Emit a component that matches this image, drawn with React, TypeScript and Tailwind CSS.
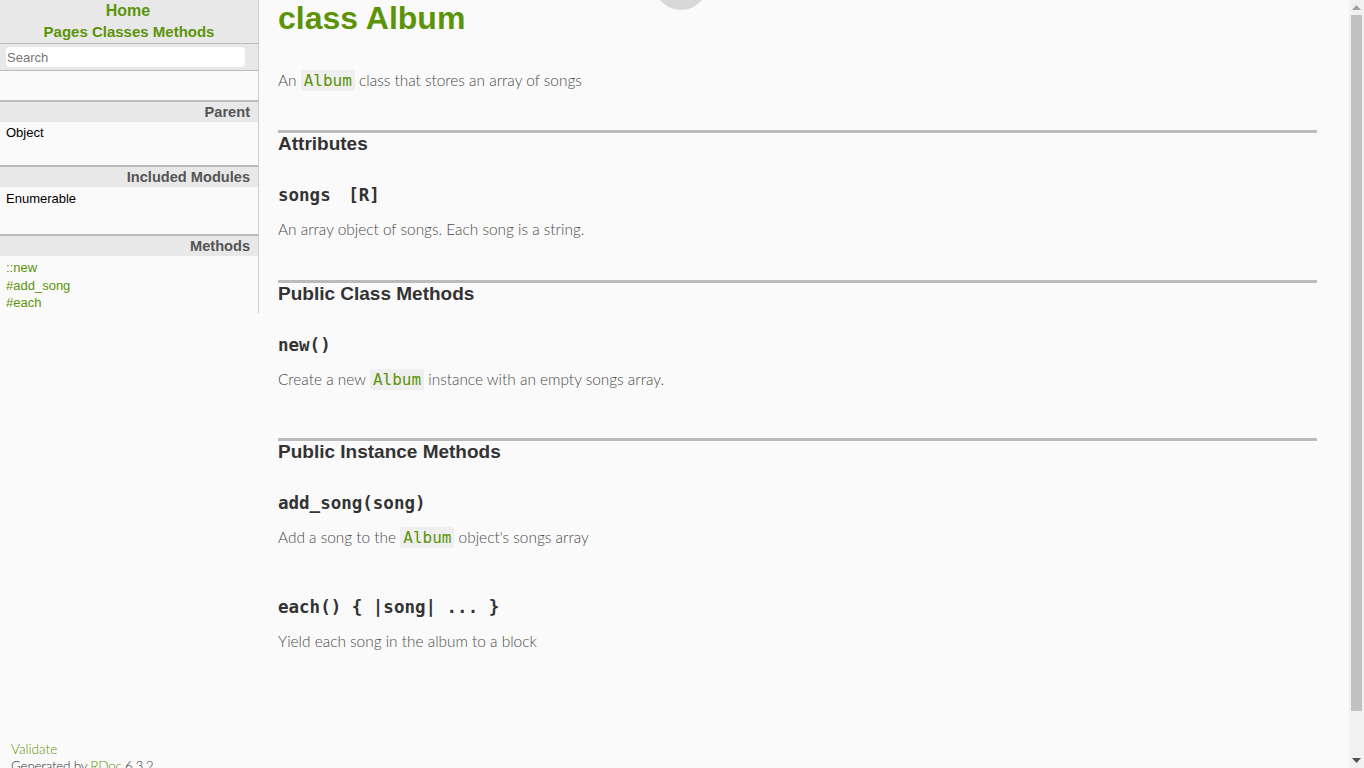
import React from "react";

const SANS = "font-['Liberation_Sans',Arial,sans-serif]";
const LATO = "font-['Lato',sans-serif]";
const MONO = "font-['DejaVu_Sans_Mono',monospace]";
const BODY = `${LATO} text-[15.4px] font-light leading-[24px] text-[#4a4a4a]`;

function Code({ children }: { children: React.ReactNode }) {
  return (
    <code className="rounded-[3px] bg-[#efefef] px-[3px] py-[1px] font-['DejaVu_Sans_Mono',monospace] text-[16px] leading-none text-[#5b9409]">
      {children}
    </code>
  );
}

function Section({
  title,
  contentClass,
  children,
}: {
  title: string;
  contentClass: string;
  children: React.ReactNode;
}) {
  return (
    <div className="border-t-2 border-[#bbb]">
      <div className="h-[20px] bg-[#e8e8e8] pr-[8px] text-right text-[14.6px] font-bold leading-[20px] text-[#555]">
        {title}
      </div>
      <div className={contentClass}>{children}</div>
    </div>
  );
}

function Scrollbar() {
  return (
    <div className="flex h-screen w-[15px] shrink-0 flex-col bg-[#f1f1f1]">
      <div className="flex h-[15px] items-center justify-center">
        <svg width="9" height="5" viewBox="0 0 9 5">
          <polygon points="4.5,0 9,5 0,5" fill="#a3a3a3" />
        </svg>
      </div>
      <div className="mx-[2px] h-[696px] bg-[#c1c1c1]" />
      <div className="flex-1" />
      <div className="flex h-[15px] items-center justify-center">
        <svg width="9" height="5" viewBox="0 0 9 5">
          <polygon points="0,0 9,0 4.5,5" fill="#505050" />
        </svg>
      </div>
    </div>
  );
}

export default function App() {
  return (
    <div className="flex h-screen overflow-hidden bg-[#fafafa]">
      <div className="relative h-screen min-w-0 flex-1 overflow-hidden">
        <div className="absolute left-[654px] top-[-44px] h-[54px] w-[54px] rounded-full bg-[#d8d8d8]" />
        <div className="flex items-start">
          <nav className={`w-[259px] shrink-0 border-r border-[#ccc] ${SANS}`}>
            <div className="border-b border-[#bbb] bg-[#e8e8e8] pb-[1px] text-center font-bold text-[#5b9409]">
              <div className="pr-[2px] text-[16px] leading-[21px]">Home</div>
              <div className="pt-[1px] text-[15px] leading-[20px]">
                <span>Pages</span> <span>Classes</span> <span>Methods</span>
              </div>
            </div>
            <div className="border-b border-[#bbb] bg-[#e8e8e8] px-[6px] py-[3px]">
              <input
                placeholder="Search"
                className="block h-[20px] w-[239px] rounded-[4px] bg-white px-[1px] text-[13px] text-black outline-none placeholder:text-[#757575]"
              />
            </div>
            <div className="h-[29px]" />
            <Section title="Parent" contentClass="h-[43px] pl-[6px] pt-[2px] text-[13px] leading-[17px] text-black">
              Object
            </Section>
            <Section
              title="Included Modules"
              contentClass="h-[47px] pl-[6px] pt-[3px] text-[13px] leading-[17px] text-black"
            >
              Enumerable
            </Section>
            <Section
              title="Methods"
              contentClass="h-[57px] pl-[6px] pt-[3px] text-[13px] leading-[17.5px] text-[#5b9409]"
            >
              <div>::new</div>
              <div>#add_song</div>
              <div>#each</div>
            </Section>
          </nav>

          <main className="min-w-0 flex-1 pb-[88px] pl-[19px] pr-[32px]">
            <h1 className={`${SANS} text-[32px] font-bold leading-[36px] text-[#5b9409]`}>class Album</h1>
            <p className={`${BODY} mt-[32px]`}>
              An <Code>Album</Code> class that stores an array of songs
            </p>

            <div className="mt-[38px] h-[3px] bg-[#bbb]" />
            <h2 className={`${SANS} mt-[1px] text-[19px] font-bold leading-[20px] text-[#333]`}>Attributes</h2>
            <div className={`${MONO} mt-[29px] text-[17.5px] font-bold leading-[24px] text-[#333]`}>
              <span>songs</span>
              <span className="ml-[1em]">[R]</span>
            </div>
            <p className={`${BODY} mt-[10px]`}>An array object of songs. Each song is a string.</p>

            <div className="mt-[39px] h-[3px] bg-[#bbb]" />
            <h2 className={`${SANS} mt-[1px] text-[19px] font-bold leading-[20px] text-[#333]`}>
              Public Class Methods
            </h2>
            <div className={`${MONO} mt-[29px] text-[17.5px] font-bold leading-[24px] text-[#333]`}>new()</div>
            <p className={`${BODY} mt-[10px]`}>
              Create a new <Code>Album</Code> instance with an empty songs array.
            </p>

            <div className="mt-[47px] h-[3px] bg-[#bbb]" />
            <h2 className={`${SANS} mt-[1px] text-[19px] font-bold leading-[20px] text-[#333]`}>
              Public Instance Methods
            </h2>
            <div className={`${MONO} mt-[29px] text-[17.5px] font-bold leading-[24px] text-[#333]`}>
              add_song(song)
            </div>
            <p className={`${BODY} mt-[10px]`}>
              Add a song to the <Code>Album</Code> object's songs array
            </p>
            <div className={`${MONO} mt-[46px] text-[17.5px] font-bold leading-[24px] text-[#333]`}>
              {"each() { |song| ... }"}
            </div>
            <p className={`${BODY} mt-[10px]`}>Yield each song in the album to a block</p>
          </main>
        </div>

        <footer className={`${LATO} pb-[40px] pl-[11px] text-[13.6px] font-light leading-[17px] text-[#333]`}>
          <div className="text-[#5b9409]">Validate</div>
          <div className="tracking-[-0.3px]">
            Generated by <span className="text-[#5b9409]">RDoc</span> 6.3.2
          </div>
        </footer>
      </div>
      <Scrollbar />
    </div>
  );
}
